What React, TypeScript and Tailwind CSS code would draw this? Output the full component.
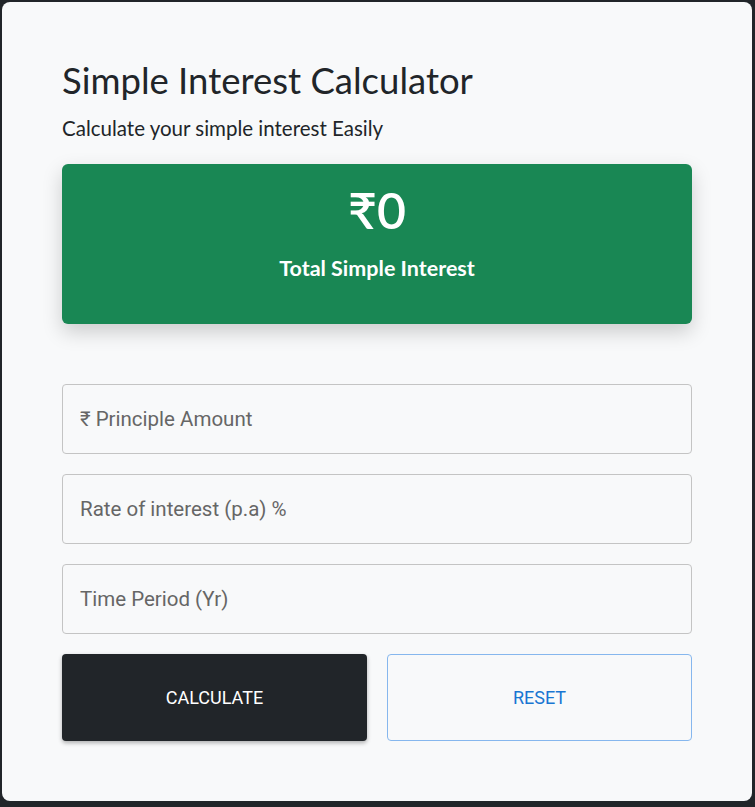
import React from "react";

export default function App() {
  return (
    <div className="w-[755px] h-[807px] bg-[#212529] pt-[2px] pl-[2px]">
      <div className="w-[750px] h-[799px] bg-[#f8f9fa] rounded-[8px] px-[60px] pt-[56px]">
        <h1 className="font-[Lato,sans-serif] text-[36.5px] leading-[44px] text-[#212529] font-normal">
          Simple Interest Calculator
        </h1>
        <p className="font-[Lato,sans-serif] text-[20.5px] leading-[24px] text-[#212529] mt-[14px]">
          Calculate your simple interest Easily
        </p>
        <div className="mt-[24px] h-[160px] bg-[#198754] rounded-[6px] shadow-[0_8px_20px_rgba(0,0,0,0.18)] flex flex-col items-center pt-[16px] text-white">
          <div className="font-[Lato,sans-serif] text-[50px] leading-[60px] font-semibold">₹0</div>
          <div className="font-[Lato,sans-serif] text-[21.5px] leading-[24px] font-bold mt-[16px]">
            Total Simple Interest
          </div>
        </div>
        <div className="mt-[60px] flex flex-col gap-[20px]">
          {["₹ Principle Amount", "Rate of interest (p.a) %", "Time Period (Yr)"].map((t) => (
            <input
              key={t}
              placeholder={t}
              className="font-[Roboto,sans-serif] h-[70px] w-full border border-[#c4c4c4] rounded-[4px] px-[17px] text-[20.5px] bg-transparent placeholder:text-[#666666] outline-none"
            />
          ))}
        </div>
        <div className="mt-[20px] grid grid-cols-2 gap-[20px]">
          <button className="font-[Roboto,sans-serif] h-[87px] bg-[#212529] text-white rounded-[4px] text-[18px] uppercase shadow-[0_2px_4px_rgba(0,0,0,0.3)]">
            Calculate
          </button>
          <button className="font-[Roboto,sans-serif] h-[87px] border border-[#86b7ee] text-[#1976d2] rounded-[4px] text-[18px] uppercase">
            Reset
          </button>
        </div>
      </div>
    </div>
  );
}
